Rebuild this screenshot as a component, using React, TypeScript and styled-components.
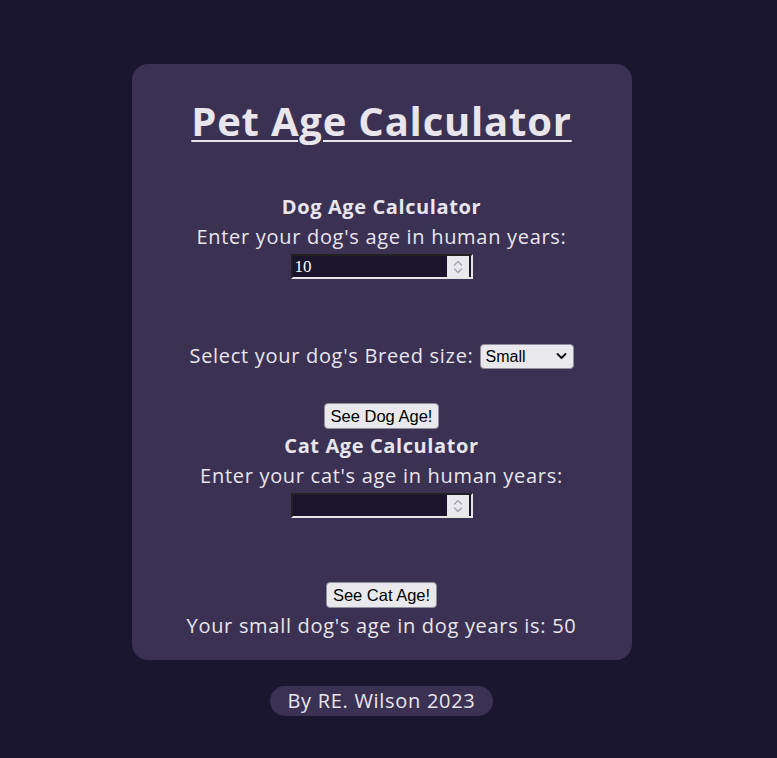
import React from "react";
import styled, { createGlobalStyle } from "styled-components";

const Global = createGlobalStyle`
  html, body {
    margin: 0;
    padding: 0;
    background: #1b1630;
  }
  body {
    font-family: "Open Sans", "Noto Sans", sans-serif;
    color: #e8e6ec;
  }
`;

const Page = styled.div`
  width: 763px;
  min-height: 758px;
  display: flex;
  flex-direction: column;
  align-items: center;
  padding-top: 64px;
  box-sizing: border-box;
`;

const Card = styled.main`
  width: 500px;
  box-sizing: border-box;
  background: #3b3153;
  border-radius: 16px;
  padding: 28px 0 19px;
  display: flex;
  flex-direction: column;
  align-items: center;
  text-align: center;
`;

const Title = styled.h1`
  margin: 0 0 41px;
  font-size: 40px;
  line-height: 58px;
  font-weight: 700;
  text-decoration: underline;
  text-decoration-thickness: 2px;
  text-underline-offset: 4px;
  letter-spacing: 0.8px;
`;

const SubTitle = styled.h2<{ $gapAbove?: number }>`
  margin: ${(p) => p.$gapAbove ?? 0}px 0 0;
  font-size: 20px;
  line-height: 31px;
  font-weight: 700;
  letter-spacing: 0.6px;
`;

const Line = styled.div<{ $gapAbove?: number }>`
  margin-top: ${(p) => p.$gapAbove ?? 0}px;
  font-size: 20px;
  line-height: 30px;
  letter-spacing: 0.7px;
  display: flex;
  align-items: center;
  justify-content: center;
  gap: 6px;
`;

const NumberField = styled.div`
  position: relative;
  margin-top: 2px;
  width: 182px;
  height: 25px;
`;

const NumberInput = styled.input`
  width: 182px;
  height: 25px;
  margin: 0;
  box-sizing: border-box;
  background: #1a152d;
  color: #ffffff;
  border: 2px inset #8b8b8b;
  border-color: #767676 #e6e6e6 #e6e6e6 #767676;
  font-family: "Liberation Serif", serif;
  font-size: 17px;
  padding: 1px 30px 0 2px;
  -moz-appearance: textfield;
  &::-webkit-inner-spin-button,
  &::-webkit-outer-spin-button {
    -webkit-appearance: none;
    margin: 0;
  }
`;

const Spinner = styled.div`
  position: absolute;
  top: 2px;
  bottom: 2px;
  right: 4px;
  width: 22px;
  background: #e9e9ed;
  display: flex;
  flex-direction: column;
  align-items: center;
  justify-content: center;
  gap: 2px;
  pointer-events: none;
  svg {
    display: block;
    flex: none;
  }
`;

const SelectWrap = styled.span`
  position: relative;
  display: inline-flex;
  width: 94px;
  height: 25px;
`;

const Select = styled.select`
  appearance: none;
  -webkit-appearance: none;
  width: 94px;
  height: 25px;
  box-sizing: border-box;
  background: #e9e9ed;
  color: #000;
  border: 1px solid #8f8f9d;
  border-radius: 4px;
  padding: 0 20px 0 5px;
  font-family: "Liberation Sans", Arial, sans-serif;
  font-size: 16px;
  letter-spacing: 0;
`;

const Chevron = styled.span`
  position: absolute;
  right: 7px;
  top: 50%;
  transform: translateY(-50%);
  display: flex;
  pointer-events: none;
`;

const Button = styled.button<{ $gapAbove?: number }>`
  font-family: "Liberation Sans", Arial, sans-serif;
  font-size: 16.5px;
  color: #000;
  background: #e9e9ed;
  border: 1px solid #8f8f9d;
  border-radius: 4px;
  height: 26px;
  padding: 0 6px;
  margin-top: ${(p) => p.$gapAbove ?? 0}px;
`;

const Footer = styled.footer`
  margin-top: 26px;
  background: #3b3153;
  border-radius: 15px;
  padding: 0 18px;
  height: 30px;
  line-height: 30px;
  font-size: 20px;
  letter-spacing: 0.7px;
`;

const SpinArrow = ({ up }: { up?: boolean }) => (
  <svg width="10" height="6" viewBox="0 0 10 6" fill="none">
    <path
      d={up ? "M1.5 5 L5 1.5 L8.5 5" : "M1.5 1 L5 4.5 L8.5 1"}
      stroke="#a3a3ab"
      strokeWidth="1.4"
      strokeLinecap="round"
      strokeLinejoin="round"
    />
  </svg>
);

const NumberBox = ({ value }: { value?: number }) => (
  <NumberField>
    <NumberInput type="number" defaultValue={value} />
    <Spinner>
      <SpinArrow up />
      <SpinArrow />
    </Spinner>
  </NumberField>
);

export default function App() {
  return (
    <>
      <Global />
      <Page>
        <Card>
          <Title>Pet Age Calculator</Title>
          <SubTitle>Dog Age Calculator</SubTitle>
          <Line>Enter your dog's age in human years:</Line>
          <NumberBox value={10} />
          <Line $gapAbove={62}>
            Select your dog's Breed size:
            <SelectWrap>
              <Select defaultValue="small">
                <option value="small">Small</option>
                <option value="medium">Medium</option>
                <option value="large">Large</option>
              </Select>
              <Chevron>
                <svg width="11" height="7" viewBox="0 0 11 7" fill="none">
                  <path
                    d="M1.5 1.5 L5.5 5.5 L9.5 1.5"
                    stroke="#111"
                    strokeWidth="1.8"
                    strokeLinecap="round"
                    strokeLinejoin="round"
                  />
                </svg>
              </Chevron>
            </SelectWrap>
          </Line>
          <Button $gapAbove={32}>See Dog Age!</Button>
          <SubTitle $gapAbove={1}>Cat Age Calculator</SubTitle>
          <Line>Enter your cat's age in human years:</Line>
          <NumberBox />
          <Button $gapAbove={64}>See Cat Age!</Button>
          <Line $gapAbove={3}>Your small dog's age in dog years is: 50</Line>
        </Card>
        <Footer>By RE. Wilson 2023</Footer>
      </Page>
    </>
  );
}
